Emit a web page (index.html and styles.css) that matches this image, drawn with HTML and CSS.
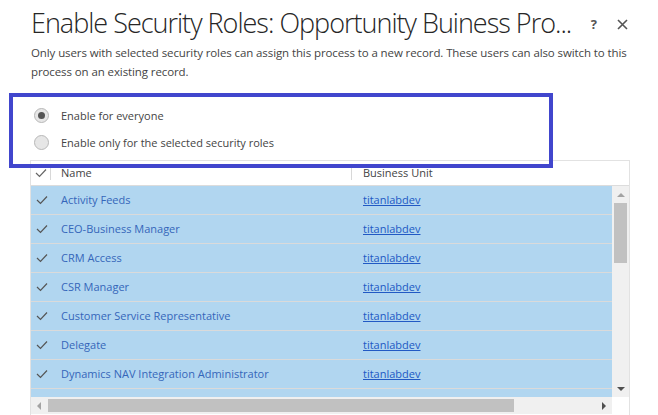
FILE: index.html
```html
<!DOCTYPE html>
<html>
<head>
<meta charset="utf-8">
<link rel="stylesheet" href="styles.css">
</head>
<body>
<div class="dialog">
  <div class="titlebar">
    <h1 class="title">Enable Security Roles: Opportunity Buiness Pro...</h1>
    <div class="title-actions">
      <span class="help">?</span>
      <svg class="close" width="11" height="11" viewBox="0 0 11 11"><path d="M1 1L10 10M10 1L1 10" stroke="#555" stroke-width="1.6" fill="none"/></svg>
    </div>
  </div>
  <p class="desc">Only users with selected security roles can assign this process to a new record. These users can also switch to this process on an existing record.</p>

  <div class="options">
    <label class="option"><span class="radio checked"></span>Enable for everyone</label>
    <label class="option"><span class="radio"></span>Enable only for the selected security roles</label>
  </div>

  <div class="grid">
    <div class="grid-head">
      <div class="col-check"><svg width="12" height="10" viewBox="0 0 12 10"><path d="M1 5L4.5 8.5L11 1.5" stroke="#666" stroke-width="1.2" fill="none"/></svg></div>
      <div class="col-name">Name</div>
      <div class="col-unit">Business Unit</div>
    </div>
    <div class="grid-body">
      <div class="rows">
        <div class="row"><div class="col-check"><svg width="12" height="10" viewBox="0 0 12 10"><path d="M1 5L4.5 8.5L11 1.5" stroke="#555" stroke-width="1.2" fill="none"/></svg></div><div class="col-name">Activity Feeds</div><div class="col-unit"><a>titanlabdev</a></div></div>
        <div class="row"><div class="col-check"><svg width="12" height="10" viewBox="0 0 12 10"><path d="M1 5L4.5 8.5L11 1.5" stroke="#555" stroke-width="1.2" fill="none"/></svg></div><div class="col-name">CEO-Business Manager</div><div class="col-unit"><a>titanlabdev</a></div></div>
        <div class="row"><div class="col-check"><svg width="12" height="10" viewBox="0 0 12 10"><path d="M1 5L4.5 8.5L11 1.5" stroke="#555" stroke-width="1.2" fill="none"/></svg></div><div class="col-name">CRM Access</div><div class="col-unit"><a>titanlabdev</a></div></div>
        <div class="row"><div class="col-check"><svg width="12" height="10" viewBox="0 0 12 10"><path d="M1 5L4.5 8.5L11 1.5" stroke="#555" stroke-width="1.2" fill="none"/></svg></div><div class="col-name">CSR Manager</div><div class="col-unit"><a>titanlabdev</a></div></div>
        <div class="row"><div class="col-check"><svg width="12" height="10" viewBox="0 0 12 10"><path d="M1 5L4.5 8.5L11 1.5" stroke="#555" stroke-width="1.2" fill="none"/></svg></div><div class="col-name">Customer Service Representative</div><div class="col-unit"><a>titanlabdev</a></div></div>
        <div class="row"><div class="col-check"><svg width="12" height="10" viewBox="0 0 12 10"><path d="M1 5L4.5 8.5L11 1.5" stroke="#555" stroke-width="1.2" fill="none"/></svg></div><div class="col-name">Delegate</div><div class="col-unit"><a>titanlabdev</a></div></div>
        <div class="row"><div class="col-check"><svg width="12" height="10" viewBox="0 0 12 10"><path d="M1 5L4.5 8.5L11 1.5" stroke="#555" stroke-width="1.2" fill="none"/></svg></div><div class="col-name">Dynamics NAV Integration Administrator</div><div class="col-unit"><a>titanlabdev</a></div></div>
        <div class="row"><div class="col-check"></div><div class="col-name"></div><div class="col-unit"></div></div>
      </div>
      <div class="vscroll">
        <div class="arrow-up"></div>
        <div class="vthumb"></div>
        <div class="vspace"></div>
        <div class="arrow-down"></div>
      </div>
    </div>
    <div class="hscroll-row">
      <div class="hscroll">
        <div class="arrow-left"></div>
        <div class="hthumb"></div>
        <div class="hspace"></div>
        <div class="arrow-right"></div>
      </div>
      <div class="corner"></div>
    </div>
  </div>

  <div class="highlight"></div>
</div>
</body>
</html>
```
FILE: styles.css
```css
* { box-sizing: border-box; }
html, body { margin: 0; padding: 0; background: #fff; overflow: hidden; }
body { font-family: "Open Sans", "Noto Sans", sans-serif; color: #444; }

.dialog { position: relative; width: 658px; height: 415px; padding: 0 0 0 30px; }

.titlebar { display: flex; align-items: flex-start; justify-content: space-between; padding-top: 4px; width: 600px; }
.title { margin: 0; font-weight: 300; font-size: 27px; line-height: 38px; color: #262626; letter-spacing: -1px; white-space: nowrap; padding-left: 1px; }
.title-actions { display: flex; align-items: center; gap: 20px; padding-top: 13px; padding-right: 2px; }
.help { font-size: 13px; font-weight: 700; color: #555; line-height: 14px; }
.close { display: block; }

.desc { margin: 1px 0 0 1px; font-size: 11.5px; letter-spacing: -0.1px; line-height: 19px; color: #444; width: 622px; }

.options { display: flex; flex-direction: column; gap: 12px; padding: 27px 0 0 4px; height: 79px; }
.option { display: flex; align-items: center; font-size: 11px; color: #444; height: 15px; }
.radio { width: 15px; height: 15px; border-radius: 50%; background: #e6e6e6; border: 1px solid #b8b8b8; margin-right: 12px; display: flex; align-items: center; justify-content: center; }
.radio.checked::after { content: ""; width: 7px; height: 7px; border-radius: 50%; background: #555; }

.grid { width: 600px; border: 1px solid #e2e2e2; border-bottom: none; height: 256px; }
.grid-head { display: flex; height: 25px; border-bottom: 1px solid #dcdcdc; font-size: 11px; color: #444; align-items: center; }
.grid-head .col-check { border-right: 1px solid #d8d8d8; height: 14px; }
.col-check { width: 20px; display: flex; align-items: center; justify-content: center; padding-left: 1px; }
.col-name { width: 301px; padding-left: 10px; }
.col-unit { padding-left: 11px; }
.grid-head .col-unit { border-left: 1px solid #d8d8d8; height: 14px; line-height: 14px; padding-left: 11px; }
.grid-head .col-name { width: 300px; line-height: 14px; }

.grid-body { display: flex; height: 211px; }
.rows { width: 581px; overflow: hidden; }
.row { display: flex; align-items: center; height: 29px; background: #b1d6f0; border-bottom: 1px solid #dadada; font-size: 11px; color: #3063b8; padding-bottom: 1px; }
.row .col-name { color: #3566ba; }
.row a { color: #2159c4; text-decoration: underline; }

.vscroll { width: 17px; background: #f0f0f0; display: flex; flex-direction: column; align-items: center; }
.arrow-up { width: 0; height: 0; border-left: 4px solid transparent; border-right: 4px solid transparent; border-bottom: 4px solid #a3a3a3; margin-top: 7px; }
.vthumb { width: 13px; height: 60px; background: #c1c1c1; margin-top: 6px; }
.vspace { flex: 1; }
.arrow-down { width: 0; height: 0; border-left: 4px solid transparent; border-right: 4px solid transparent; border-top: 4px solid #505050; margin-bottom: 6px; }

.hscroll-row { display: flex; height: 17px; }
.hscroll { width: 581px; background: #f0f0f0; display: flex; align-items: center; }
.arrow-left { width: 0; height: 0; border-top: 4px solid transparent; border-bottom: 4px solid transparent; border-right: 4px solid #a3a3a3; margin-left: 6px; }
.hthumb { width: 466px; height: 13px; background: #c1c1c1; margin-left: 7px; }
.hspace { flex: 1; }
.arrow-right { width: 0; height: 0; border-top: 4px solid transparent; border-bottom: 4px solid transparent; border-left: 4px solid #505050; margin-right: 6px; }
.corner { flex: 1; background: #fff; }

.highlight { position: absolute; left: 9px; top: 93px; width: 544px; height: 75px; border: 4px solid #4146cd; pointer-events: none; }
```
